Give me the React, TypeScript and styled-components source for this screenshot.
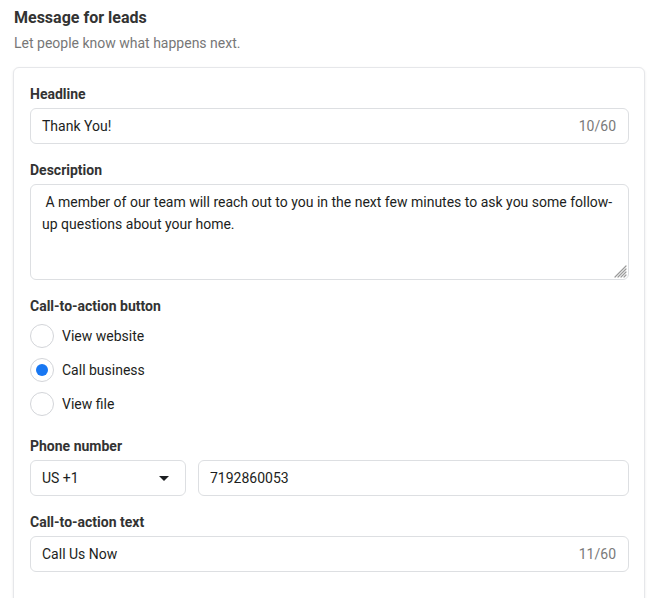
import React from "react";
import styled, { createGlobalStyle } from "styled-components";

const Global = createGlobalStyle`
  html, body { margin: 0; padding: 0; background: #ffffff; }
  body { font-family: Roboto, "Liberation Sans", Arial, sans-serif; color: #1c1e21; -webkit-font-smoothing: antialiased; }
  * { box-sizing: border-box; }
`;

const Page = styled.div`
  padding: 8px 8px 0 13px;
  width: 653px;
`;

const Title = styled.h2`
  margin: 0 0 0 1px;
  font-size: 16px;
  line-height: 20px;
  font-weight: 700;
  color: #333333;
`;

const Subtitle = styled.p`
  margin: 5px 0 0 1px;
  font-size: 14px;
  line-height: 20px;
  color: #777777;
`;

const Card = styled.div`
  margin-top: 14px;
  width: 632px;
  border: 1px solid #e6e7ea;
  border-radius: 6px;
  box-shadow: 0 1px 3px rgba(0, 0, 0, 0.08);
  padding: 17px 15px 40px 16px;
  background: #fff;
`;

const Field = styled.div<{ $gap?: number }>`
  display: flex;
  flex-direction: column;
  margin-bottom: ${(p) => p.$gap ?? 17}px;
`;

const Label = styled.div<{ $mb?: number }>`
  font-size: 14px;
  line-height: 18px;
  font-weight: 700;
  color: #333333;
  margin-bottom: ${(p) => p.$mb ?? 5}px;
`;

const InputBox = styled.div<{ $width?: number }>`
  display: flex;
  align-items: center;
  height: 36px;
  border: 1px solid #dddfe2;
  border-radius: 6px;
  padding: 0 12px 0 11px;
  font-size: 14px;
  color: #1c1e21;
  background: #fff;
  ${(p) => (p.$width ? `width: ${p.$width}px; flex: none;` : "flex: 1;")}
`;

const Value = styled.span`
  flex: 1;
  white-space: nowrap;
`;

const Counter = styled.span`
  color: #7a7a7a;
  font-size: 14px;
`;

const AreaWrap = styled.div`
  position: relative;
  width: 599px;
  height: 96px;
`;

const TextArea = styled.textarea`
  display: block;
  width: 599px;
  height: 96px;
  border: 1px solid #dddfe2;
  border-radius: 6px;
  padding: 6px 12px 6px 11px;
  font-family: Roboto, "Liberation Sans", Arial, sans-serif;
  font-size: 14px;
  line-height: 22px;
  color: #1c1e21;
  resize: none;
  outline: none;
`;

const Grip = styled.svg`
  position: absolute;
  right: 2px;
  bottom: 2px;
  width: 13px;
  height: 13px;
  pointer-events: none;
`;

const RadioList = styled.div`
  display: flex;
  flex-direction: column;
`;

const RadioRow = styled.label`
  display: flex;
  align-items: center;
  height: 34px;
  font-size: 14px;
  color: #1c1e21;
  gap: 8px;
`;

const Circle = styled.span<{ $checked?: boolean }>`
  width: 24px;
  height: 24px;
  border-radius: 50%;
  border: 1px solid #d3d5d9;
  display: flex;
  align-items: center;
  justify-content: center;
  flex: none;
  &::after {
    content: "";
    width: 12px;
    height: 12px;
    border-radius: 50%;
    background: ${(p) => (p.$checked ? "#1877f2" : "transparent")};
  }
`;

const Row = styled.div`
  display: flex;
  gap: 12px;
  width: 599px;
`;

const Caret = styled.span`
  width: 0;
  height: 0;
  border-left: 5px solid transparent;
  border-right: 5px solid transparent;
  border-top: 5px solid #1c1e21;
  margin-right: 4px;
`;

function Radio({ label, checked }: { label: string; checked?: boolean }) {
  return (
    <RadioRow>
      <Circle $checked={checked} />
      {label}
    </RadioRow>
  );
}

export default function App() {
  return (
    <>
      <Global />
      <Page>
        <Title>Message for leads</Title>
        <Subtitle>Let people know what happens next.</Subtitle>
        <Card>
          <Field>
            <Label>Headline</Label>
            <Row>
              <InputBox>
                <Value>Thank You!</Value>
                <Counter>10/60</Counter>
              </InputBox>
            </Row>
          </Field>
          <Field>
            <Label>Description</Label>
            <AreaWrap>
              <TextArea
                readOnly
                value=" A member of our team will reach out to you in the next few minutes to ask you some follow-up questions about your home."
              />
              <Grip viewBox="0 0 13 13">
                <g stroke="#9a9a9a" strokeWidth="1.2" strokeLinecap="round">
                  <line x1="12" y1="1" x2="1" y2="12" />
                  <line x1="12" y1="4" x2="4" y2="12" />
                  <line x1="12" y1="7" x2="7" y2="12" />
                  <line x1="12" y1="10" x2="10" y2="12" />
                </g>
              </Grip>
            </AreaWrap>
          </Field>
          <Field $gap={16}>
            <Label $mb={4}>Call-to-action button</Label>
            <RadioList>
              <Radio label="View website" />
              <Radio label="Call business" checked />
              <Radio label="View file" />
            </RadioList>
          </Field>
          <Field>
            <Label>Phone number</Label>
            <Row>
              <InputBox $width={156}>
                <Value>US +1</Value>
                <Caret />
              </InputBox>
              <InputBox>
                <Value>7192860053</Value>
              </InputBox>
            </Row>
          </Field>
          <Field $gap={0}>
            <Label>Call-to-action text</Label>
            <Row>
              <InputBox>
                <Value>Call Us Now</Value>
                <Counter>11/60</Counter>
              </InputBox>
            </Row>
          </Field>
        </Card>
      </Page>
    </>
  );
}
